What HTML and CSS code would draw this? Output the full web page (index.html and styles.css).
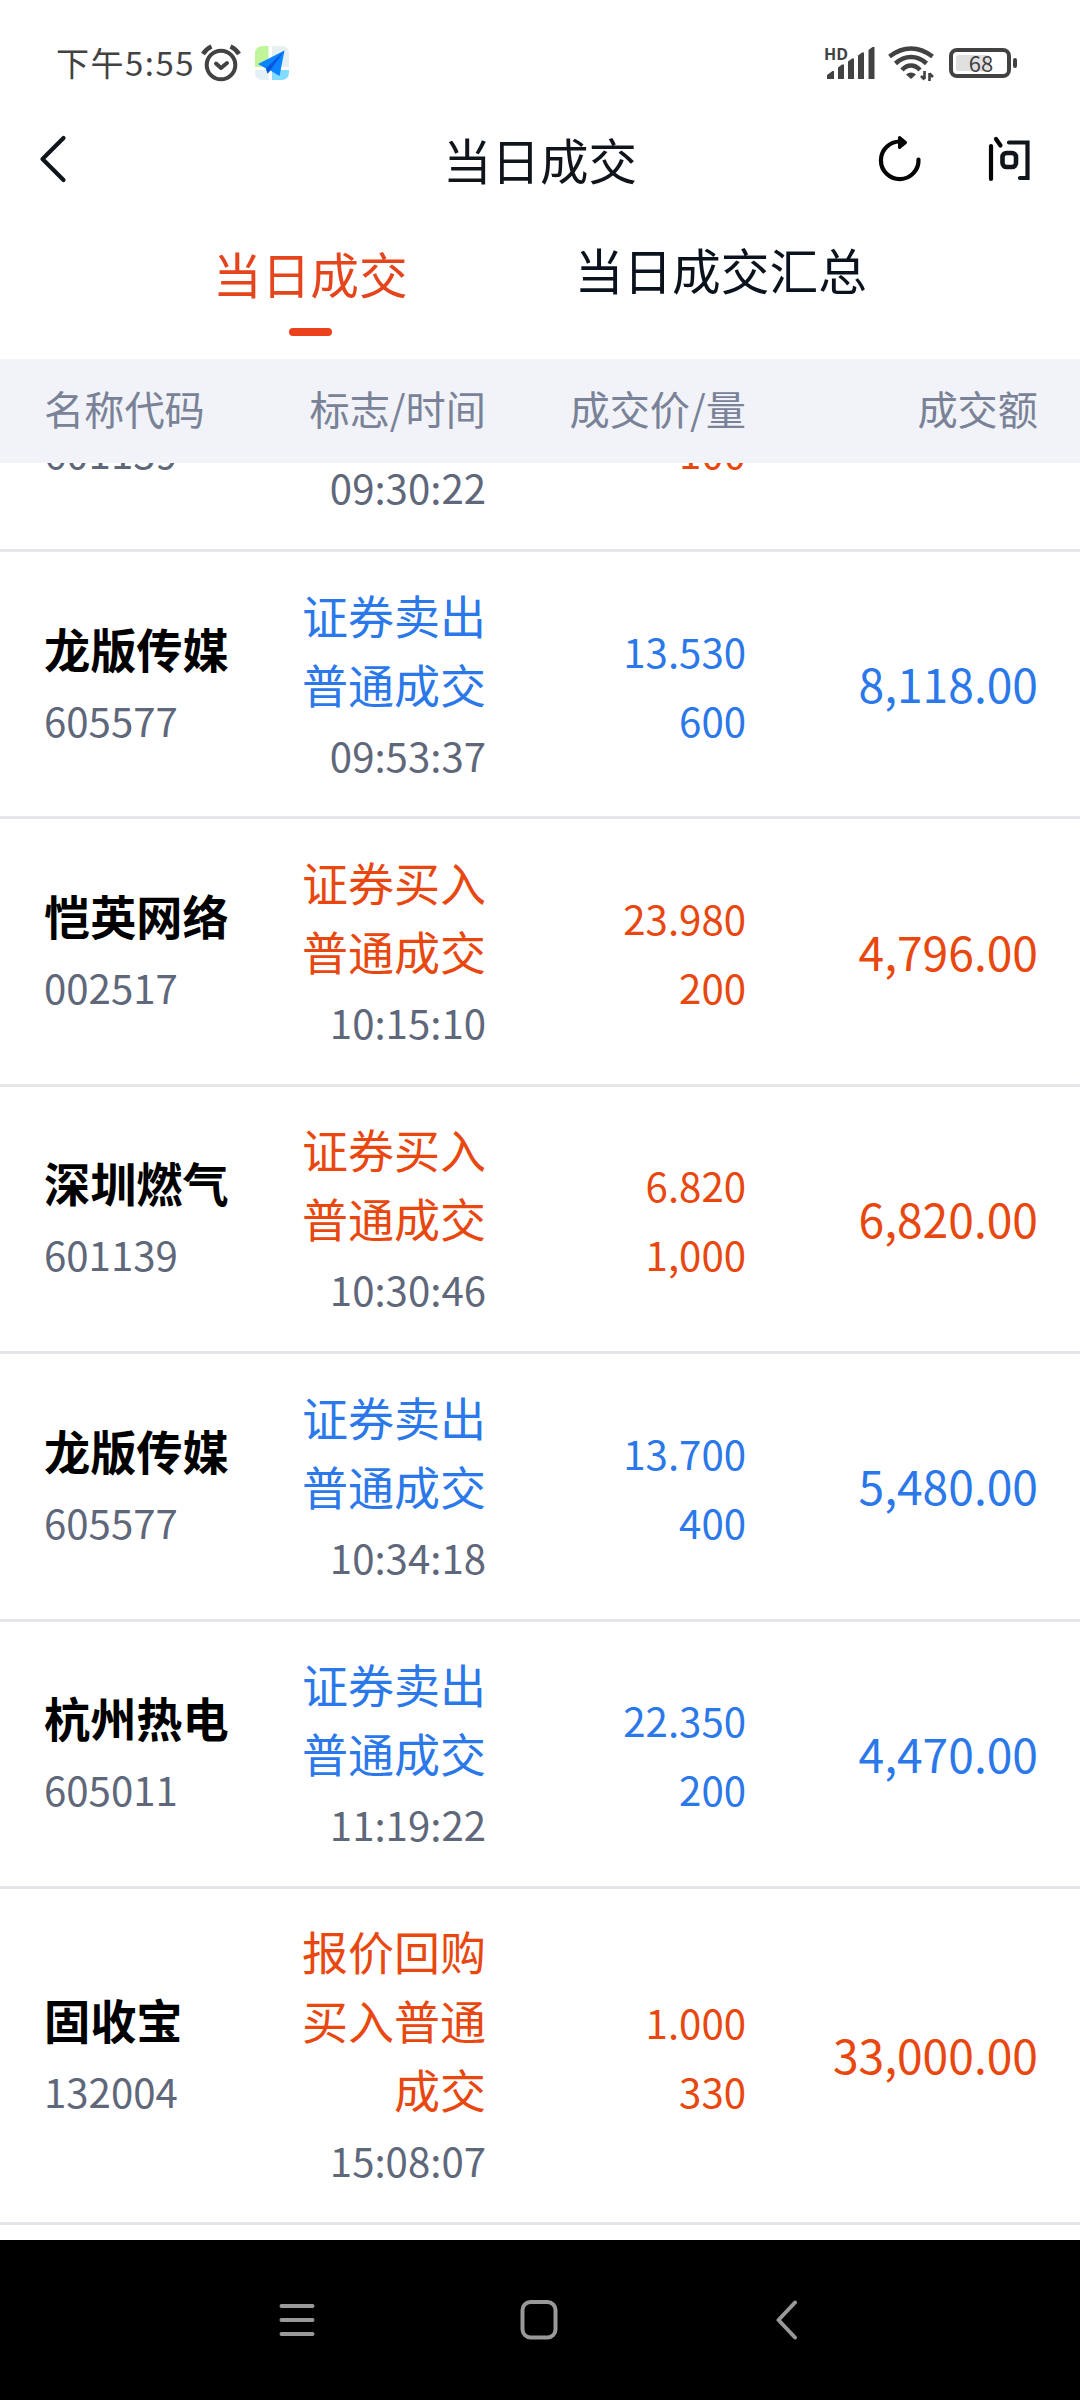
FILE: index.html
```html
<!DOCTYPE html>
<html lang="zh-CN">
<head>
  <meta charset="UTF-8">
  <meta name="viewport" content="width=device-width,initial-scale=1">
  <title>当日成交</title>
  <link rel="stylesheet" href="styles.css">
</head>
<body>
<div class="screen">

  <!-- 状态栏 -->
  <div class="status">
    <div class="status-left">
      <span class="clock">下午5:55</span>
      <svg class="ic-alarm" width="40" height="38" viewBox="0 0 40 38" fill="none" stroke="#424242" stroke-width="4" stroke-linecap="round" stroke-linejoin="round">
        <circle cx="20" cy="21" r="14.3"/>
        <path d="M15 19.5l5 4.5 6-5"/>
        <path d="M2 10q3-5 8.500-7.500M38 10q-3-5-8.500-7.500" stroke-linecap="butt" stroke-width="4.500"/>
      </svg>
      <svg class="ic-app" width="34" height="34" viewBox="0 0 34 34">
        <path d="M8 0h5.500v21H0V8Q0 0 8 0z" fill="#c0f59a"/>
        <path d="M17 0h9q8 0 8 8v13H17z" fill="#e8f0f1"/>
        <path d="M0 24h13.500v10H8Q0 34 0 26z" fill="#e3f0f5"/>
        <path d="M17 24h17v2q0 8-8 8h-9z" fill="#83dcff"/>
        <path d="M29.500 4.500L3 18l8 4.500 1.500 5 3-3 9 5.500z" fill="#0a84ff"/>
        <path d="M29.500 4.500L11 22.500l1.500 5 3-3.500z" fill="#0a55e0"/>
      </svg>
    </div>
    <div class="status-right">
      <svg width="52" height="36" viewBox="0 0 52 36" fill="#424242">
        <text class="hd" x="-1" y="15">HD</text>
        <path d="M2 34v-4l5.500-4H9v8zM13 34V22.500l4-3h2V34zM23 34V16.500l4-3h2V34zM33 34V10.500l4-3h2V34zM43.500 34V5l4-3h2v32z"/>
      </svg>
      <svg class="ic-wifi" width="47" height="36" viewBox="0 0 47 36" fill="none" stroke="#424242" stroke-width="4.500">
        <path d="M1.500 11.500Q12 3.500 23 3.500t21.500 8"/>
        <path d="M7.500 18.500Q14.500 12 23 12t15.500 6.500"/>
        <path d="M14 25q4-4.500 9-4.500t9 4.500"/>
        <path d="M18 29.500q5-4 10 0L23 34z" fill="#424242" stroke="none"/>
        <path d="M36.500 26v8M33 31l3.500 3.500M41.500 36v-8M45 32l-3.500-3.500" stroke-width="2.600"/>
      </svg>
      <div class="battery"><i class="battery-fill"></i><span>68</span></div>
      <i class="battery-nub"></i>
    </div>
  </div>

  <!-- 标题栏 -->
  <div class="titlebar">
    <svg width="30" height="50" viewBox="0 0 30 50" fill="none" stroke="#0f151b" stroke-width="4.200" stroke-linecap="round" stroke-linejoin="round"><path d="M25.500 4L4.500 25l21 21"/></svg>
    <h1>当日成交</h1>
    <div class="actions">
      <svg width="44" height="50" viewBox="0 0 44 50" fill="none" stroke="#050505" stroke-width="4.200" stroke-linecap="round">
        <path d="M40.500 25.500A18.800 18.800 0 1 1 22 7.500"/>
        <path d="M21.500 3.500L27.500 8.500l-6 5z" fill="#050505" stroke-width="3" stroke-linejoin="round"/>
      </svg>
      <svg width="44" height="50" viewBox="0 0 44 50" fill="none" stroke="#0f151b" stroke-width="4.200" stroke-linecap="round">
        <path d="M4 12v33M9 5l4.500 6.500" stroke="#050505"/>
        <path d="M22 8.500h18.500V44H33"/>
        <rect x="15.500" y="19" width="13.500" height="14" rx="4" stroke-width="4.600"/>
      </svg>
    </div>
  </div>

  <div class="tabs">
    <div class="tab active">当日成交</div>
    <div class="tab">当日成交汇总</div>
  </div>

  <div class="row thead">
    <div>名称代码</div>
    <div>标志/时间</div>
    <div>成交价/量</div>
    <div>成交额</div>
  </div>

  <!-- 成交列表，首行已滚动到表头下方 -->
  <div class="list">
    <div class="rows">
      <div class="row item buy">
        <div class="stock"><b>&nbsp;</b><span>601139</span></div>
        <div class="type">&nbsp;<br>&nbsp;<time>09:30:22</time></div>
        <div class="price">&nbsp;<br>100</div>
        <div class="amount"></div>
      </div>
      <div class="row item sell">
        <div class="stock"><b>龙版传媒</b><span>605577</span></div>
        <div class="type">证券卖出普通成交<time>09:53:37</time></div>
        <div class="price">13.530<br>600</div>
        <div class="amount">8,118.00</div>
      </div>
      <div class="row item buy">
        <div class="stock"><b>恺英网络</b><span>002517</span></div>
        <div class="type">证券买入普通成交<time>10:15:10</time></div>
        <div class="price">23.980<br>200</div>
        <div class="amount">4,796.00</div>
      </div>
      <div class="row item buy">
        <div class="stock"><b>深圳燃气</b><span>601139</span></div>
        <div class="type">证券买入普通成交<time>10:30:46</time></div>
        <div class="price">6.820<br>1,000</div>
        <div class="amount">6,820.00</div>
      </div>
      <div class="row item sell">
        <div class="stock"><b>龙版传媒</b><span>605577</span></div>
        <div class="type">证券卖出普通成交<time>10:34:18</time></div>
        <div class="price">13.700<br>400</div>
        <div class="amount">5,480.00</div>
      </div>
      <div class="row item sell">
        <div class="stock"><b>杭州热电</b><span>605011</span></div>
        <div class="type">证券卖出普通成交<time>11:19:22</time></div>
        <div class="price">22.350<br>200</div>
        <div class="amount">4,470.00</div>
      </div>
      <div class="row item buy">
        <div class="stock"><b>固收宝</b><span>132004</span></div>
        <div class="type">报价回购买入普通成交<time>15:08:07</time></div>
        <div class="price">1.000<br>330</div>
        <div class="amount">33,000.00</div>
      </div>
    </div>
  </div>

  <!-- 系统导航键 -->
  <div class="navbar">
    <svg width="36" height="40" viewBox="0 0 36 40" stroke="#999" stroke-width="4" stroke-linecap="round"><path d="M2.500 6h31M2.500 20h31M2.500 34h31"/></svg>
    <svg class="ic-home" width="38" height="40" viewBox="0 0 38 40" fill="none" stroke="#999" stroke-width="4"><rect x="2.500" y="2" width="33" height="35.500" rx="8"/></svg>
    <svg width="24" height="40" viewBox="0 0 24 40" fill="none" stroke="#999" stroke-width="4" stroke-linecap="round" stroke-linejoin="round"><path d="M20 2.500L3.500 20 20 37.500"/></svg>
  </div>

</div>
</body>
</html>
```
FILE: styles.css
```css
*,*::before,*::after{margin:0;padding:0;box-sizing:border-box}
body {
  width:1080px;height:2400px;
  overflow:hidden;
  background:#fff;
  font-family:"Noto Sans CJK SC",sans-serif;
}
svg {display:block;flex:none}
.screen {
  display:flex;
  flex-direction:column;
  height:2400px;
}

/* ===== 状态栏 ===== */
.status {
  height:110px;
  padding:16px 63px 0 56px;
  display:flex;
  align-items:center;
  justify-content:space-between;
  color:#424242;
}
.status-left,.status-right {display:flex;align-items:center}
.clock {
  font-size:33px;
  line-height:40px;
  letter-spacing:1.5px;
  width:145px;
  padding-bottom:2px;
  white-space:nowrap;
}
.ic-app {margin-left:14px}
.hd {font:700 16px "Open Sans","Noto Sans CJK SC",sans-serif}
.ic-wifi {margin-left:11px}
.battery {
  position:relative;
  width:62px;height:30px;
  margin-left:14px;
  border:4px solid #424242;
  border-radius:8px;
  font-size:22px;
  line-height:20px;
  text-align:center;
}
.battery span {position:relative;left:1px}
.battery-fill {
  position:absolute;
  left:3px;top:3px;
  width:33px;height:16px;
  background:#e0e0e0;
  border-radius:2px;
}
.battery-nub {
  width:4px;height:10px;
  margin-left:2px;
  border-radius:2px;
  background:#424242;
}

/* ===== 标题栏 ===== */
.titlebar {
  height:98px;
  padding:0 49px 0 38px;
  display:grid;
  grid-template-columns:405px auto 1fr;
  align-items:center;
}
.titlebar h1 {
  font-size:48.500px;
  font-weight:400;
  color:#0f151b;
  line-height:70px;
}
.actions {
  display:flex;
  justify-content:flex-end;
  gap:65px;
}

/* ===== 标签 ===== */
.tabs {
  height:151px;
  display:flex;
  padding-left:213px;
  gap:167px;
  font-size:48.700px;
  line-height:70px;
  color:#0a121e;
}
.tab {padding-top:26px;white-space:nowrap}
.tab.active {
  padding-top:30px;
  color:#e5451c;
}
.tab.active::after {
  content:"";
  display:block;
  width:43px;height:8px;
  margin:20px auto 0;
  border-radius:4px;
  background:#ec421b;
}

/* ===== 表格 ===== */
.row {
  display:grid;
  grid-template-columns:248px 195px 260px 292px;
  align-items:center;
  padding:0 42px 0 43px;
  text-align:right;
}
.row > :first-child {padding-left:1px;text-align:left}
.thead {
  flex:none;
  height:104px;
  padding-bottom:8px;
  background:#f1f3f8;
  color:#798297;
  font-size:40.200px;
}
.list {
  flex:1;
  min-height:0;
  overflow:hidden;
}
.rows {margin-top:-178.400px}
.item {
  height:267.400px;
  border-bottom:3px solid #e4e6ea;
  line-height:69px;
}
.item:last-child {height:336px}
.stock {padding-bottom:2px}
.stock b {
  display:block;
  font-size:46.200px;
  color:#000;
}
.stock span {
  display:block;
  margin-top:3px;
  font-size:40.200px;
  color:#5f687a;
}
.type {font-size:46px}
.type time {
  display:block;
  margin-top:2px;
  font-size:40.200px;
  color:#5f687a;
}
.price {
  padding-top:1px;
  font-size:40.200px;
}
.amount {
  padding-bottom:3px;
  font-size:46.200px;
}
.buy {color:#e8480f}
.sell {color:#2b78ea}

/* ===== 导航键 ===== */
.navbar {
  flex:none;
  height:160px;
  padding:0 281px 0 279px;
  display:flex;
  align-items:center;
  justify-content:space-between;
  background:#000;
}
.ic-home {margin-right:12px}
```
